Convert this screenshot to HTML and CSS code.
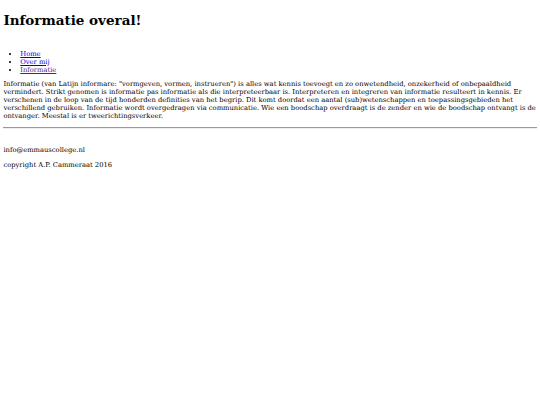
FILE: index.html
```html
<!DOCTYPE html>
<html lang="nl">
<head>
<meta charset="utf-8">
<title>Informatie overal!</title>
<link rel="stylesheet" href="styles.css">
</head>
<body>
<h1 class="title">Informatie overal!</h1>
<nav class="nav">
<ul class="menu">
<li><a href="#" class="link">Home</a></li>
<li><a href="#" class="link">Over mij</a></li>
<li><a href="#" class="link visited">Informatie</a></li>
</ul>
</nav>
<main class="content">
<p class="text">Informatie (van Latijn informare: "vormgeven, vormen, instrueren") is alles wat kennis toevoegt en zo onwetendheid, onzekerheid of onbepaaldheid vermindert. Strikt genomen is informatie pas informatie als die interpreteerbaar is. Interpreteren en integreren van informatie resulteert in kennis. Er verschenen in de loop van de tijd honderden definities van het begrip. Dit komt doordat een aantal (sub)wetenschappen en toepassingsgebieden het verschillend gebruiken. Informatie wordt overgedragen via communicatie. Wie een boodschap overdraagt is de zender en wie de boodschap ontvangt is de ontvanger. Meestal is er tweerichtingsverkeer.</p>
</main>
<hr class="rule">
<footer class="footer">
<p class="foot">info@emmauscollege.nl</p>
<p class="foot">copyright A.P. Cammeraat 2016</p>
</footer>
</body>
</html>
```
FILE: styles.css
```css
html { background: #fff; }
body {
  margin: 3.375px;
  font-family: "DejaVu Serif", serif;
  font-size: 6.75px;
  color: #000;
}
.title {
  font-size: 13.5px;
  margin: 9.05px 0;
  font-weight: bold;
}
.nav { padding-top: 5.5px; }
.menu {
  margin: 6.75px 0;
  padding-left: 16.875px;
}
.link { color: #00e; }
.link.visited { color: #551a8b; }
.text { margin: 6.75px 0; }
.rule {
  margin: 1.5px 0 3.375px;
  height: 0;
  border: 0;
  border-top: 1px solid #9a9a9a;
  border-bottom: 1px solid #eee;
}
.footer { padding-top: 7px; }
.foot { margin: 6.75px 0; }
```
